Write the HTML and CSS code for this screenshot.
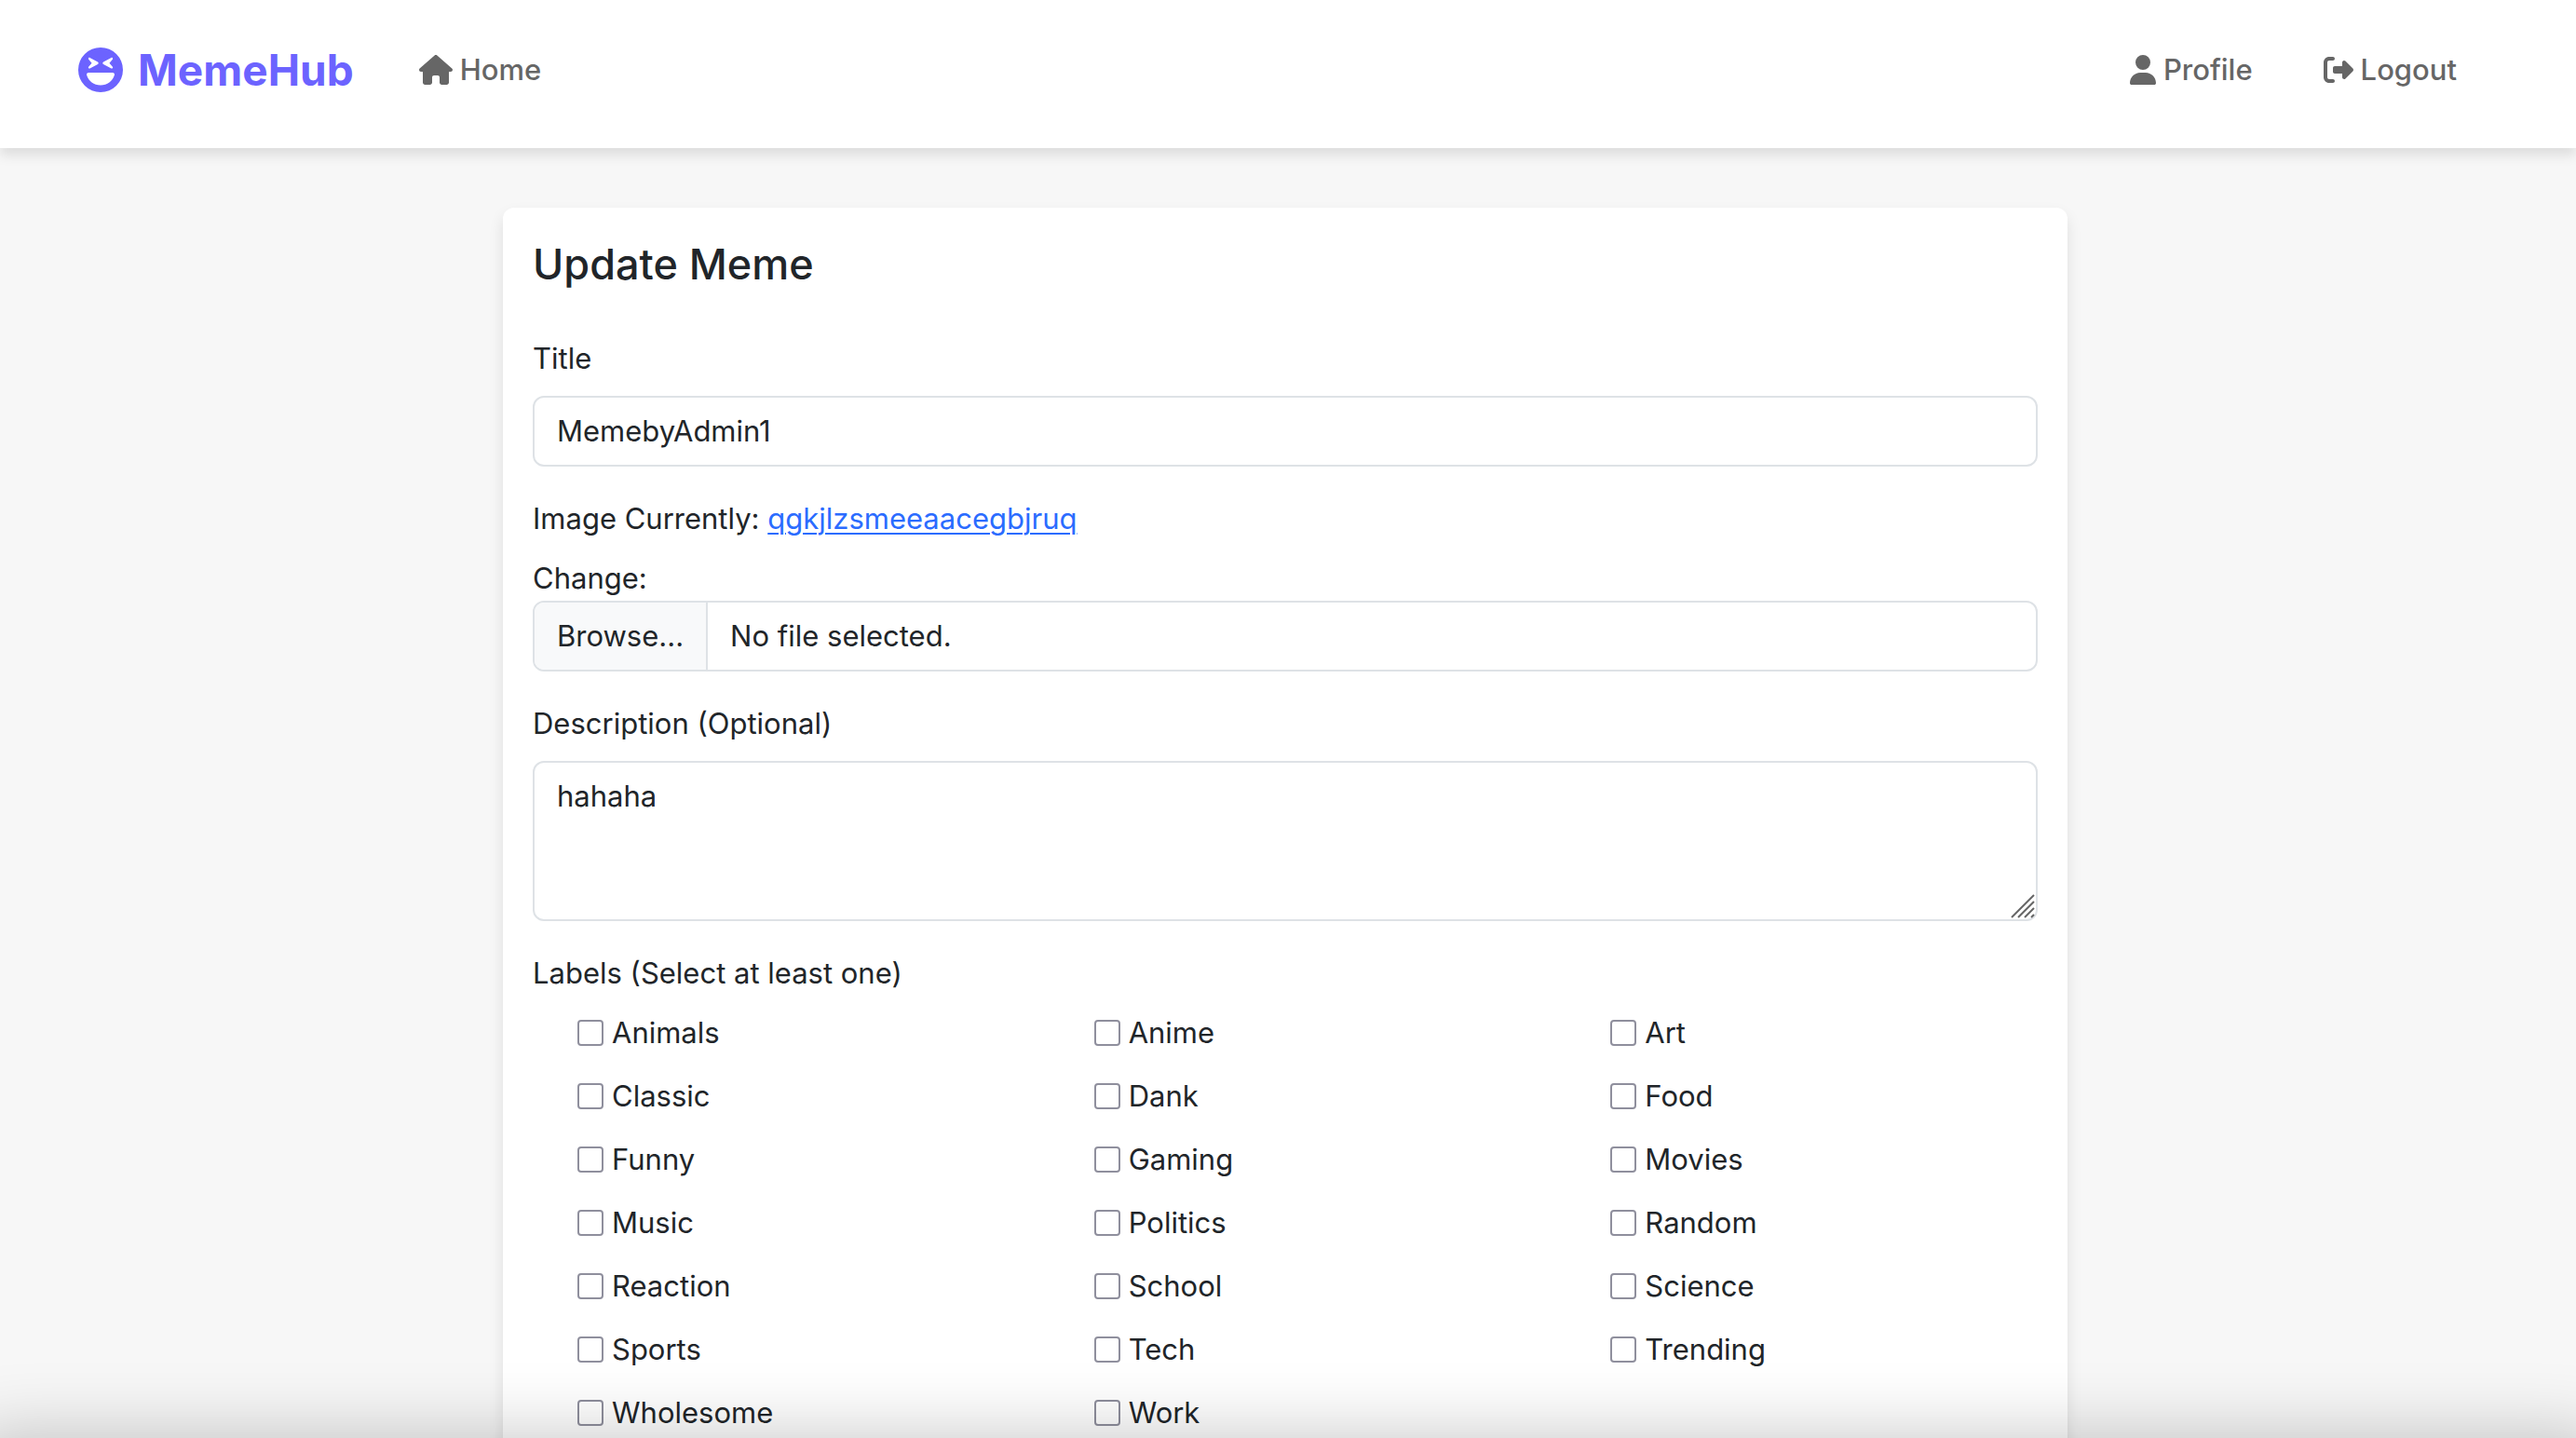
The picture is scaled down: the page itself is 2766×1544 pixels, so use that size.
FILE: index.html
```html
<!DOCTYPE html>
<html lang="en">
<head>
<meta charset="utf-8">
<meta name="viewport" content="width=device-width, initial-scale=1">
<title>Update Meme - MemeHub</title>
<link rel="stylesheet" href="styles.css">
</head>
<body>
<header class="navbar">
  <a class="brand" href="#">
    <svg class="brand-icon" viewBox="0 0 512 512" aria-hidden="true"><path fill-rule="evenodd" d="M256 512A256 256 0 1 0 256 0a256 256 0 1 0 0 512zM96.800 314.100c-3.800-13.700 7.400-26.100 21.600-26.100l275.200 0c14.200 0 25.500 12.400 21.600 26.100C396.200 382 332.100 432 256 432s-140.200-50-159.200-117.900zM133.500 116.700l89.900 47.900c10.700 5.700 10.700 21.100 0 26.800l-89.900 47.900c-7.900 4.200-17.500-1.500-17.500-10.500c0-2.800 1-5.500 2.800-7.600l36-43.200-36-43.200c-1.800-2.100-2.800-4.800-2.800-7.600c0-9 9.600-14.700 17.500-10.500zM396 127.200c0 2.800-1 5.500-2.800 7.600l-36 43.200 36 43.200c1.800 2.100 2.800 4.800 2.800 7.600c0 9-9.600 14.700-17.500 10.500l-89.900-47.900c-10.700-5.700-10.700-21.100 0-26.800l89.900-47.900c7.900-4.200 17.500 1.500 17.500 10.500z"/></svg>
    <span>MemeHub</span>
  </a>
  <nav class="nav">
    <a class="nav-link" href="#">
      <svg class="icon-wide" viewBox="0 0 576 512" aria-hidden="true"><path d="M575.800 255.500c0 18-15 32.100-32 32.100h-32l.7 160.200c0 2.700-.2 5.400-.5 8.100V472c0 22.100-17.900 40-40 40H456c-1.100 0-2.200 0-3.300-.1c-1.400 .1-2.800 .1-4.200 .1H416 392c-22.100 0-40-17.900-40-40V448 384c0-17.700-14.300-32-32-32H256c-17.700 0-32 14.300-32 32v64 24c0 22.100-17.900 40-40 40H160 128.100c-1.500 0-3-.1-4.500-.2c-1.200 .1-2.400 .2-3.600 .2H104c-22.100 0-40-17.900-40-40V360c0-.9 0-1.900 .1-2.800V287.600H32c-18 0-32-14-32-32.100c0-9 3-17 10-24L266.400 8c7-7 15-8 22-8s15 2 21 7L564.800 231.500c8 7 12 15 11 24z"/></svg>
      <span>Home</span>
    </a>
    <div class="nav-end">
      <a class="nav-link" href="#">
        <svg class="icon-narrow" viewBox="0 0 448 512" aria-hidden="true"><path d="M224 256A128 128 0 1 0 224 0a128 128 0 1 0 0 256zm-45.700 48C79.800 304 0 383.800 0 482.300C0 498.700 13.300 512 29.700 512H418.300c16.400 0 29.700-13.300 29.700-29.700C448 383.800 368.200 304 269.700 304H178.300z"/></svg>
        <span>Profile</span>
      </a>
      <a class="nav-link" href="#">
        <svg class="icon" viewBox="0 0 512 512" aria-hidden="true"><path d="M502.600 278.600c12.500-12.500 12.500-32.800 0-45.300l-128-128c-9.200-9.200-22.900-11.900-34.900-6.900s-19.800 16.600-19.800 29.600l0 64-128 0c-17.700 0-32 14.300-32 32l0 64c0 17.700 14.300 32 32 32l128 0 0 64c0 12.900 7.800 24.600 19.800 29.600s25.700 2.200 34.900-6.900l128-128zM160 96c17.700 0 32-14.300 32-32s-14.300-32-32-32L96 32C43 32 0 75 0 128L0 384c0 53 43 96 96 96l64 0c17.700 0 32-14.300 32-32s-14.300-32-32-32l-64 0c-17.700 0-32-14.300-32-32l0-256c0-17.700 14.300-32 32-32l64 0z"/></svg>
        <span>Logout</span>
      </a>
    </div>
  </nav>
</header>

<main class="page">
  <form class="card">
    <h1 class="card-title">Update Meme</h1>

    <div class="field">
      <label for="title">Title</label>
      <input class="control" id="title" type="text" value="MemebyAdmin1">
    </div>

    <div class="field">
      <div>Image Currently: <a class="link" href="#">qgkjlzsmeeaacegbjruq</a></div>
      <div>
        <label class="block" for="image">Change:</label>
        <div class="control file">
          <span class="file-button">Browse...</span>
          <span class="file-name">No file selected.</span>
          <input class="file-input" id="image" type="file">
        </div>
      </div>
    </div>

    <div class="field">
      <label for="description">Description (Optional)</label>
      <div class="textarea-wrap">
        <textarea class="control" id="description" rows="3">hahaha</textarea>
        <svg class="grip" viewBox="0 0 26 26" aria-hidden="true"><path d="M1 25L25 1M8 25L25 8M15 25L25 15M22 25L25 22"/></svg>
      </div>
    </div>

    <fieldset class="field labels">
      <legend>Labels (Select at least one)</legend>
      <div class="label-grid">
        <label class="check"><input type="checkbox">Animals</label>
        <label class="check"><input type="checkbox">Anime</label>
        <label class="check"><input type="checkbox">Art</label>
        <label class="check"><input type="checkbox">Classic</label>
        <label class="check"><input type="checkbox">Dank</label>
        <label class="check"><input type="checkbox">Food</label>
        <label class="check"><input type="checkbox">Funny</label>
        <label class="check"><input type="checkbox">Gaming</label>
        <label class="check"><input type="checkbox">Movies</label>
        <label class="check"><input type="checkbox">Music</label>
        <label class="check"><input type="checkbox">Politics</label>
        <label class="check"><input type="checkbox">Random</label>
        <label class="check"><input type="checkbox">Reaction</label>
        <label class="check"><input type="checkbox">School</label>
        <label class="check"><input type="checkbox">Science</label>
        <label class="check"><input type="checkbox">Sports</label>
        <label class="check"><input type="checkbox">Tech</label>
        <label class="check"><input type="checkbox">Trending</label>
        <label class="check"><input type="checkbox">Wholesome</label>
        <label class="check"><input type="checkbox">Work</label>
      </div>
    </fieldset>
  </form>
</main>
<div class="bottom-shade"></div>
</body>
</html>
```
FILE: styles.css
```css
*, *::before, *::after { box-sizing: border-box; }

html { scrollbar-width: none; }

body {
  margin: 0;
  background: #f7f7f7;
  color: #212529;
  font: 400 31px/48px Inter, "Liberation Sans", sans-serif;
}

svg { fill: currentColor; flex: none; }

.navbar {
  position: relative;
  display: flex;
  align-items: center;
  gap: 70px;
  padding: 40px 128px 49px 84px;
  min-height: 159px;
  background: #fff;
  box-shadow: 0 8px 12px rgba(0, 0, 0, 0.1);
}

.brand {
  display: flex;
  align-items: center;
  gap: 16px;
  color: #6c63ff;
  font-size: 46px;
  font-weight: 700;
  line-height: 70px;
  text-decoration: none;
}
.brand-icon { width: 48px; height: 48px; }

.nav { flex: 1; display: flex; justify-content: space-between; }
.nav-end { display: flex; gap: 76px; }
.nav-link {
  display: flex;
  align-items: center;
  gap: 8px;
  color: #666;
  font-weight: 500;
  text-decoration: none;
}
.icon, .icon-wide, .icon-narrow { height: 32px; }
.icon { width: 32px; }
.icon-wide { width: 36px; }
.icon-narrow { width: 28px; }

.page { padding: 64px 6px 64px 0; }

.card {
  max-width: 1680px;
  margin: 0 auto;
  padding: 32px;
  display: flex;
  flex-direction: column;
  gap: 32px;
  background: #fff;
  border-radius: 12px;
  box-shadow: 0 8px 16px rgba(0, 0, 0, 0.1);
}
.card-title { margin: 0 0 16px; font-size: 45px; font-weight: 500; line-height: 58px; }

.field { display: flex; flex-direction: column; gap: 16px; }
.block { display: block; }
.link { color: #2b6cff; text-underline-offset: 4px; text-decoration-thickness: 2px; }

.control {
  display: block;
  width: 100%;
  margin: 0;
  padding: 12px 24px;
  border: 2px solid #dee2e6;
  border-radius: 12px;
  background: #fff;
  color: inherit;
  font: inherit;
}

.file { position: relative; display: flex; padding: 0; overflow: hidden; }
.file-button {
  padding: 12px 24px;
  border-right: 2px solid #dee2e6;
  background: #f8f9fa;
}
.file-name { padding: 12px 24px; }
.file-input { position: absolute; inset: 0; width: 100%; opacity: 0; }

.textarea-wrap { position: relative; }
textarea.control { resize: vertical; }
textarea.control::-webkit-resizer { display: none; }
.grip {
  position: absolute;
  right: 3px;
  bottom: 3px;
  width: 26px;
  height: 26px;
  fill: none;
  stroke: #666;
  stroke-width: 2;
  pointer-events: none;
}

.labels { margin: 0; padding: 0; border: 0; min-width: 0; }
.labels legend { padding: 0; margin-bottom: 16px; }
.label-grid {
  display: grid;
  grid-template-columns: repeat(3, 1fr);
  row-gap: 20px;
  margin: 0 -24px;
}
.check { display: flex; align-items: center; gap: 9px; padding-left: 72px; }
.check input {
  appearance: none;
  width: 28px;
  height: 28px;
  margin: 0;
  border: 2px solid #8f8f9d;
  border-radius: 4px;
  background: #fff;
}
.check input:checked { background: #6c63ff; border-color: #6c63ff; }

.bottom-shade {
  position: fixed;
  inset: auto 0 0;
  height: 100px;
  overflow: hidden;
  pointer-events: none;
}
.bottom-shade::after {
  content: "";
  position: absolute;
  inset: 100% -32px auto;
  height: 200px;
  box-shadow: 0 0 80px rgba(0, 0, 0, 0.24);
}
```
